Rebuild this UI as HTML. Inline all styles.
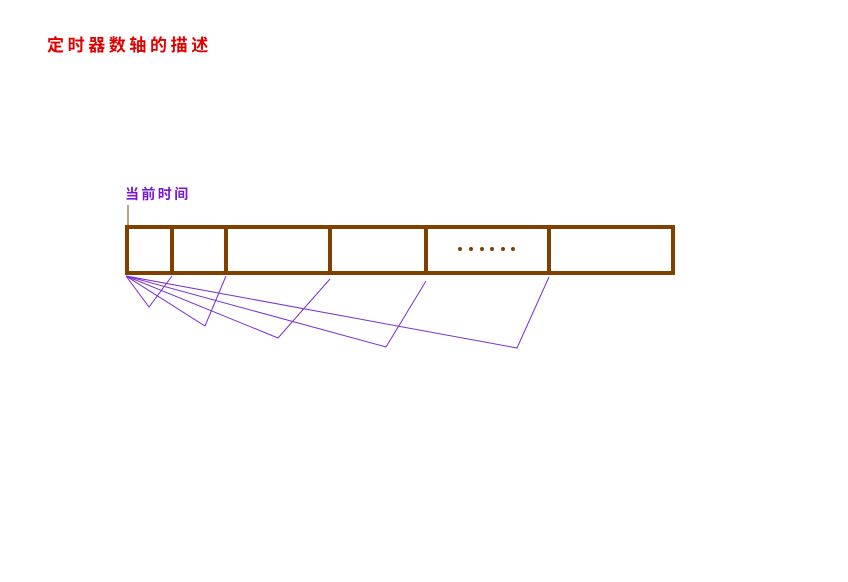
<!DOCTYPE html>
<html><head><meta charset="utf-8"><style>
html,body{margin:0;padding:0;background:#fff;width:848px;height:582px;overflow:hidden}
</style></head><body>
<svg width="848" height="582" xmlns="http://www.w3.org/2000/svg" style="position:absolute;left:0;top:0">
<text x="47" y="51" font-family="'Liberation Sans','Noto Sans CJK SC',sans-serif" font-size="17" font-weight="bold" fill="#e00000" letter-spacing="3.6">定时器数轴的描述</text>
<text x="125" y="199" font-family="'Liberation Sans','Noto Sans CJK SC',sans-serif" font-size="14" font-weight="bold" fill="#7a18d0" letter-spacing="2.4">当前时间</text>
<line x1="128" y1="205" x2="128" y2="225" stroke="#804000" stroke-width="1"/>
<rect x="127" y="227" width="546" height="46" fill="none" stroke="#804000" stroke-width="4"/>
<g stroke="#804000" stroke-width="4">
<line x1="172" y1="227" x2="172" y2="273"/>
<line x1="226" y1="227" x2="226" y2="273"/>
<line x1="330" y1="227" x2="330" y2="273"/>
<line x1="426" y1="227" x2="426" y2="273"/>
<line x1="549" y1="227" x2="549" y2="273"/>
</g>
<g fill="#804000">
<circle cx="460" cy="249" r="2"/><circle cx="471" cy="249" r="2"/><circle cx="482" cy="249" r="2"/>
<circle cx="492" cy="249" r="2"/><circle cx="503" cy="249" r="2"/><circle cx="513" cy="249" r="2"/>
</g>
<g stroke="#7a30d0" stroke-width="1" fill="none">
<polyline points="126,276 149,307 172,276"/>
<polyline points="126,276 205,326 226,276"/>
<polyline points="126,276 278,338 330,279"/>
<polyline points="126,276 386,347 426,281"/>
<polyline points="126,276 517,348 549,277"/>
</g>
</svg>
</body></html>
